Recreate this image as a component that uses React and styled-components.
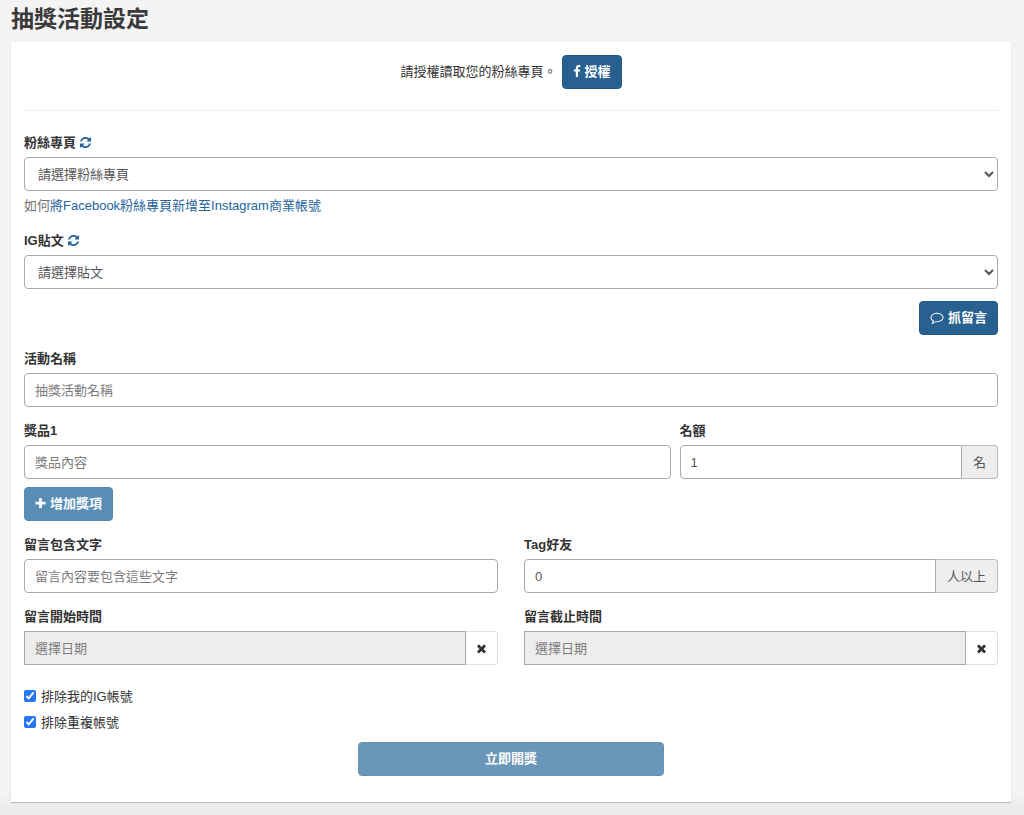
import React, { useState } from 'react'
import styled, { createGlobalStyle } from 'styled-components'

const GlobalStyle = createGlobalStyle`
    *, *::before, *::after {
        box-sizing: border-box;
    }
    body {
        margin: 0;
        background: #f4f4f4;
        color: #333;
        font-family: "Liberation Sans", "Noto Sans CJK TC", sans-serif;
        font-size: 13px;
        line-height: 19px;
    }
    button, input, select {
        font: inherit;
    }
`

const Page = styled.main`
    min-height: 100vh;
    padding: 4px 13px 13px 11px;
    background: linear-gradient(#f4f4f4, #e9e9e9) bottom / 100% 24px no-repeat;
`

const Title = styled.h1`
    margin: 0 0 8px;
    font-size: 23px;
    font-weight: bold;
    line-height: 30px;
    color: #3a3a3a;
`

const Panel = styled.form`
    padding: 13px 13px 26px;
    background: #fff;
    box-shadow: 0 1px 1px rgba(0, 0, 0, 0.2);
`

const AuthBar = styled.div`
    display: flex;
    align-items: center;
    justify-content: center;
    gap: 5px;
    padding-bottom: 21px;
    margin-bottom: 22px;
    border-bottom: 1px solid #eee;
`

const AuthText = styled.span`
    padding-bottom: 2px;
`

const Button = styled.button`
    display: inline-flex;
    align-items: center;
    justify-content: center;
    gap: 4px;
    height: 34px;
    padding: 0 10px 2px;
    border: 1px solid ${props => props.$border || '#235985'};
    border-radius: 4px;
    background: ${props => props.$color || '#286090'};
    color: #fff;
    font-weight: bold;
    cursor: pointer;
`

const SubmitButton = styled(Button)`
    display: flex;
    width: calc(100% / 3 - 18px);
    margin: 10px auto 0;
`

const Icon = styled.svg`
    width: ${props => props.$width || 13}px;
    height: 13px;
    fill: currentColor;
`

const Field = styled.div`
    margin-bottom: ${props => props.$gap || 14}px;
    min-width: 0;
`

const LabelRow = styled.div`
    display: flex;
    align-items: center;
    gap: 3px;
    margin-bottom: 5px;
`

const Label = styled.label`
    font-weight: bold;
`

const RefreshButton = styled.button`
    display: flex;
    padding: 0;
    border: 0;
    background: none;
    color: #23639b;
    cursor: pointer;
`

const Input = styled.input`
    display: block;
    flex: 1;
    width: 100%;
    min-width: 0;
    height: 34px;
    padding: 6px 10px;
    border: 1px solid #aaa;
    border-radius: ${props => (props.$grouped ? '4px 0 0 4px' : '4px')};
    background: #fff;
    color: #555;

    &::placeholder {
        color: #7c7c7c;
        opacity: 1;
    }
    &:read-only {
        border-radius: 0;
        background: #ededed;
    }
`

const Select = styled.select`
    display: block;
    width: 100%;
    height: 34px;
    padding: 6px 0 6px 9px;
    border: 1px solid #aaa;
    border-radius: 4px;
    background: #fff;
    color: #555;
`

const Help = styled.p`
    margin: 5px 0 0;
    color: #737373;
`

const Link = styled.a`
    color: #23639b;
    text-decoration: none;
`

const Group = styled.div`
    display: flex;
`

const Addon = styled.span`
    display: flex;
    align-items: center;
    padding: 0 11px;
    border: 1px solid #bbb;
    border-left: 0;
    border-radius: 0 4px 4px 0;
    background: #eee;
    color: #555;
`

const ClearButton = styled.button`
    display: flex;
    align-items: center;
    justify-content: center;
    width: 32px;
    padding: 0;
    border: 1px solid #ddd;
    border-left: 0;
    border-radius: 0 4px 4px 0;
    background: #fff;
    color: #333;
    cursor: pointer;
`

const Actions = styled.div`
    display: flex;
    justify-content: ${props => (props.$right ? 'flex-end' : 'flex-start')};
    margin-bottom: 14px;
`

const PrizeRow = styled.div`
    display: grid;
    grid-template-columns: 67fr 33fr;
    column-gap: 9px;
`

const Halves = styled.div`
    display: grid;
    grid-template-columns: 1fr 1fr;
    column-gap: 26px;
`

const Checks = styled.div`
    display: grid;
    gap: 7px;
    padding-top: 8px;
`

const CheckLabel = styled.label`
    display: flex;
    align-items: center;
    gap: 5px;
`

const Checkbox = styled.input`
    width: 12px;
    height: 12px;
    margin: 0 0 2px;
    accent-color: #2675f5;
`

const icons = {
    facebook: 'M1343 12v264h-157q-86 0-116 36t-30 108v189h293l-39 296h-254v759h-306v-759h-255v-296h255v-218q0-186 104-288.5t277-102.500q147 0 228 12z',
    refresh: 'M1639 1056q0 5-1 7-64 268-268 434.500t-478 166.500q-146 0-282.500-55t-243.500-157l-129 129q-19 19-45 19t-45-19-19-45v-448q0-26 19-45t45-19h448q26 0 45 19t19 45-19 45l-137 137q71 66 161 102t187 36q134 0 250-65t186-179q11-17 53-117 8-23 30-23h192q13 0 22.500 9.500t9.500 22.500zm25-800v448q0 26-19 45t-45 19h-448q-26 0-45-19t-19-45 19-45l138-138q-148-137-349-137-134 0-250 65t-186 179q-11 17-53 117-8 23-30 23h-199q-13 0-22.500-9.500t-9.500-22.500v-7q65-268 270-434.500t480-166.500q146 0 284 55.500t245 156.500l130-129q19-19 45-19t45 19 19 45z',
    comment: 'M896 384q-204 0-381.500 69.500t-282 187.500-104.500 255q0 112 71.500 213.500t201.500 175.500l87 50-27 96q-24 91-70 172 152-63 275-171l43-38 57 6q69 8 130 8 204 0 381.500-69.500t282-187.500 104.500-255-104.500-255-282-187.500-381.500-69.500zm896 512q0 174-120 321.500t-326 233-450 85.500q-70 0-145-8-198 175-460 242-49 14-114 22h-5q-15 0-27-10.500t-16-27.500v-1q-3-4-.5-12t2-10 4.500-9.500l6-9 7-8.500 8-9q7-8 31-34.500t34.500-38 31-39.500 32.500-51 27-59 26-76q-157-89-247.500-220t-90.500-281q0-174 120-321.500t326-233 450-85.500 450 85.500 326 233 120 321.500z',
    plus: 'M1600 736v192q0 40-28 68t-68 28h-416v416q0 40-28 68t-68 28h-192q-40 0-68-28t-28-68v-416h-416q-40 0-68-28t-28-68v-192q0-40 28-68t68-28h416v-416q0-40 28-68t68-28h192q40 0 68 28t28 68v416h416q40 0 68 28t28 68z',
    times: 'M1490 1322q0 40-28 68l-136 136q-28 28-68 28t-68-28l-294-294-294 294q-28 28-68 28t-68-28l-136-136q-28-28-28-68t28-68l294-294-294-294q-28-28-28-68t28-68l136-136q28-28 68-28t68 28l294 294 294-294q28-28 68-28t68 28l136 136q28 28 28 68t-28 68l-294 294 294 294q28 28 28 68z',
}

function Glyph({ name, box = '0 0 1792 1792', width }) {
    return (
        <Icon viewBox={box} $width={width} aria-hidden="true">
            <path d={icons[name]} />
        </Icon>
    )
}

function SelectField({ id, label, placeholder, gap, children }) {
    return (
        <Field $gap={gap}>
            <LabelRow>
                <Label htmlFor={id}>{label}</Label>
                <RefreshButton type="button"><Glyph name="refresh" /></RefreshButton>
            </LabelRow>
            <Select id={id}>
                <option>{placeholder}</option>
            </Select>
            {children}
        </Field>
    )
}

function TextField({ id, label, gap, addon, ...rest }) {
    return (
        <Field $gap={gap}>
            <LabelRow>
                <Label htmlFor={id}>{label}</Label>
            </LabelRow>
            <Group>
                <Input id={id} type="text" $grouped={Boolean(addon)} {...rest} />
                {addon && <Addon>{addon}</Addon>}
            </Group>
        </Field>
    )
}

function DateField({ id, label }) {
    return (
        <Field>
            <LabelRow>
                <Label htmlFor={id}>{label}</Label>
            </LabelRow>
            <Group>
                <Input id={id} type="text" placeholder="選擇日期" readOnly />
                <ClearButton type="button"><Glyph name="times" /></ClearButton>
            </Group>
        </Field>
    )
}

export default function App() {
    const [skipMine, setSkipMine] = useState(true)
    const [skipRepeat, setSkipRepeat] = useState(true)

    return (
        <Page>
            <GlobalStyle />
            <Title>抽獎活動設定</Title>
            <Panel onSubmit={e => e.preventDefault()}>
                <AuthBar>
                    <AuthText>請授權讀取您的粉絲專頁。</AuthText>
                    <Button type="button">
                        <Glyph name="facebook" box="384 0 1024 1792" width={8} />
                        授權
                    </Button>
                </AuthBar>

                <SelectField id="page" label="粉絲專頁" placeholder="請選擇粉絲專頁" gap={16}>
                    <Help>
                        如何<Link href="#">將Facebook粉絲專頁新增至Instagram商業帳號</Link>
                    </Help>
                </SelectField>
                <SelectField id="post" label="IG貼文" placeholder="請選擇貼文" gap={12} />
                <Actions $right>
                    <Button type="button"><Glyph name="comment" width={14} />抓留言</Button>
                </Actions>

                <TextField id="name" label="活動名稱" placeholder="抽獎活動名稱" />
                <PrizeRow>
                    <TextField id="prize" label="獎品1" placeholder="獎品內容" gap={8} />
                    <TextField id="quota" label="名額" defaultValue="1" addon="名" gap={8} />
                </PrizeRow>
                <Actions>
                    <Button type="button" $color="#588db6" $border="#5389b3">
                        <Glyph name="plus" box="192 0 1408 1792" width={11} />增加獎項
                    </Button>
                </Actions>

                <Halves>
                    <TextField id="words" label="留言包含文字" placeholder="留言內容要包含這些文字" />
                    <TextField id="tags" label="Tag好友" defaultValue="0" addon="人以上" />
                    <DateField id="start" label="留言開始時間" />
                    <DateField id="end" label="留言截止時間" />
                </Halves>

                <Checks>
                    <CheckLabel>
                        <Checkbox type="checkbox" checked={skipMine} onChange={e => setSkipMine(e.target.checked)} />
                        排除我的IG帳號
                    </CheckLabel>
                    <CheckLabel>
                        <Checkbox type="checkbox" checked={skipRepeat} onChange={e => setSkipRepeat(e.target.checked)} />
                        排除重複帳號
                    </CheckLabel>
                </Checks>
                <SubmitButton type="submit" $color="#6a96b8" $border="#6592b5">立即開獎</SubmitButton>
            </Panel>
        </Page>
    )
}
